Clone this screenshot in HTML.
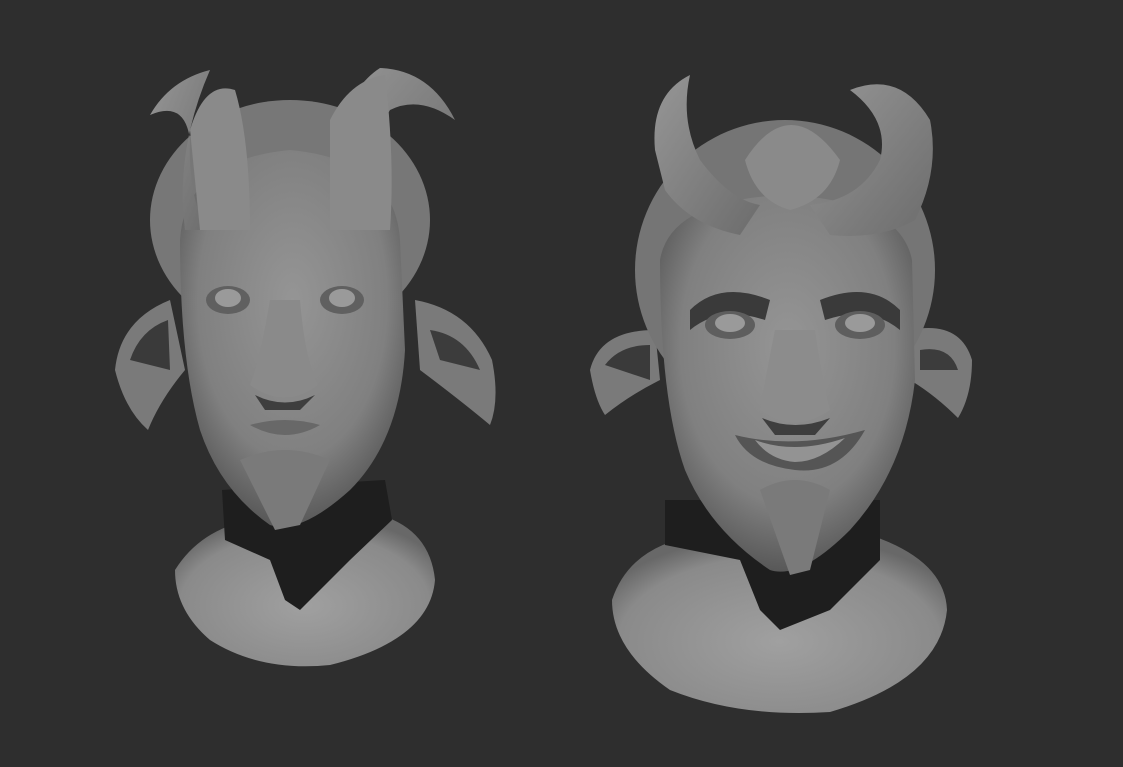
<!DOCTYPE html>
<html><head><style>
html,body{margin:0;padding:0;background:#2e2e2e;}
svg{display:block;}
</style></head><body>
<svg width="1123" height="767" viewBox="0 0 1123 767" xmlns="http://www.w3.org/2000/svg">
<defs>
<radialGradient id="face" cx="0.5" cy="0.4" r="0.6">
<stop offset="0" stop-color="#959595"/><stop offset="0.7" stop-color="#808080"/><stop offset="1" stop-color="#585858"/>
</radialGradient>
<radialGradient id="base" cx="0.5" cy="0.6" r="0.6">
<stop offset="0" stop-color="#a0a0a0"/><stop offset="0.8" stop-color="#8a8a8a"/><stop offset="1" stop-color="#686868"/>
</radialGradient>
<linearGradient id="horn" x1="0" y1="0" x2="1" y2="1">
<stop offset="0" stop-color="#969696"/><stop offset="1" stop-color="#6c6c6c"/>
</linearGradient>
</defs>
<rect width="1123" height="767" fill="#2e2e2e"/>

<path d="M175 570 Q200 530 250 520 L380 515 Q430 530 435 580 Q430 640 330 665 Q260 672 210 640 Q175 610 175 570Z" fill="url(#base)"/>
<path d="M222 490 L385 480 L392 520 L350 560 L300 610 L285 600 L270 560 L225 540Z" fill="#1e1e1e"/>
<path d="M170 300 Q120 320 115 370 Q125 410 148 430 Q160 400 185 370Z" fill="#7a7a7a"/>
<path d="M130 360 Q140 330 168 320 L170 370Z" fill="#3a3a3a"/>
<path d="M415 300 Q470 310 492 360 Q500 400 490 425 Q460 400 420 370Z" fill="#7a7a7a"/>
<path d="M430 330 Q465 335 480 370 L440 360Z" fill="#3c3c3c"/>
<ellipse cx="290" cy="220" rx="140" ry="120" fill="#777"/>
<path d="M180 240 Q185 160 290 150 Q395 160 400 240 L405 350 Q400 440 350 490 Q300 535 270 525 Q220 490 200 430 Q180 360 180 240Z" fill="url(#face)"/>
<path d="M185 230 Q175 150 210 70 Q170 80 150 115 Q185 100 190 140 Q188 190 205 230Z" fill="url(#horn)"/>
<path d="M330 220 Q330 100 380 68 Q430 70 455 120 Q420 95 390 110 Q370 140 385 220Z" fill="url(#horn)"/>
<path d="M190 130 Q205 80 235 90 Q250 140 250 230 L200 230Z" fill="#8a8a8a"/>
<path d="M330 120 Q350 80 385 75 Q395 160 390 230 L330 230Z" fill="#8a8a8a"/>
<ellipse cx="228" cy="300" rx="22" ry="14" fill="#606060"/>
<ellipse cx="342" cy="300" rx="22" ry="14" fill="#606060"/>
<ellipse cx="228" cy="298" rx="13" ry="9" fill="#9a9a9a"/>
<ellipse cx="342" cy="298" rx="13" ry="9" fill="#9a9a9a"/>
<path d="M270 300 Q260 360 250 385 Q285 410 318 385 Q305 360 300 300Z" fill="#8a8a8a"/>
<path d="M255 395 Q285 410 315 395 L300 410 L265 410Z" fill="#3e3e3e"/>
<path d="M250 425 Q285 415 320 425 Q285 445 250 425Z" fill="#686868"/>
<path d="M240 460 Q285 440 330 460 L300 525 L275 530Z" fill="#7a7a7a"/>

<path d="M612 600 Q630 545 700 535 L870 535 Q945 560 947 610 Q940 680 830 712 Q740 718 670 690 Q612 650 612 600Z" fill="url(#base)"/>
<path d="M665 500 L880 500 L880 560 L830 610 L780 630 L760 610 L740 560 L665 545Z" fill="#1e1e1e"/>
<path d="M655 330 Q600 330 590 370 Q595 400 605 415 Q630 395 660 380Z" fill="#7a7a7a"/>
<path d="M605 365 Q620 345 650 345 L650 380Z" fill="#3a3a3a"/>
<path d="M910 330 Q960 320 972 360 Q972 395 958 418 Q935 395 910 380Z" fill="#7a7a7a"/>
<path d="M920 350 Q950 345 958 370 L920 370Z" fill="#3c3c3c"/>
<ellipse cx="785" cy="270" rx="150" ry="150" fill="#757575"/>
<path d="M660 260 Q670 200 785 195 Q900 200 912 260 L915 380 Q905 470 850 530 Q800 580 770 570 Q710 530 685 470 Q660 400 660 260Z" fill="url(#face)"/>
<path d="M655 150 Q650 95 690 75 Q680 120 700 160 Q730 200 760 205 L740 235 Q690 225 665 190Z" fill="url(#horn)"/>
<path d="M850 90 Q900 70 930 120 Q940 170 915 220 Q880 240 830 235 L810 205 Q860 200 880 160 Q890 120 850 90Z" fill="url(#horn)"/>
<path d="M745 160 Q790 90 840 160 Q830 200 790 210 Q755 200 745 160Z" fill="#8a8a8a"/>
<path d="M690 310 Q720 280 770 300 L765 320 Q720 305 690 330Z" fill="#3a3a3a"/>
<path d="M900 310 Q870 280 820 300 L825 320 Q870 305 900 330Z" fill="#3a3a3a"/>
<ellipse cx="730" cy="325" rx="25" ry="14" fill="#5e5e5e"/>
<ellipse cx="860" cy="325" rx="25" ry="14" fill="#5e5e5e"/>
<ellipse cx="730" cy="323" rx="15" ry="9" fill="#9a9a9a"/>
<ellipse cx="860" cy="323" rx="15" ry="9" fill="#9a9a9a"/>
<path d="M775 330 Q765 380 760 410 Q795 435 830 410 Q822 380 815 330Z" fill="#8c8c8c"/>
<path d="M762 418 Q795 432 830 418 L815 435 L775 435Z" fill="#3e3e3e"/>
<path d="M735 435 Q795 450 865 430 Q840 475 795 470 Q750 465 735 435Z" fill="#555"/>
<path d="M755 440 Q795 455 845 438 Q820 462 795 462 Q770 460 755 440Z" fill="#939393"/>
<path d="M760 490 Q795 470 830 490 L810 570 L790 575Z" fill="#7a7a7a"/>
</svg>
</body></html>
